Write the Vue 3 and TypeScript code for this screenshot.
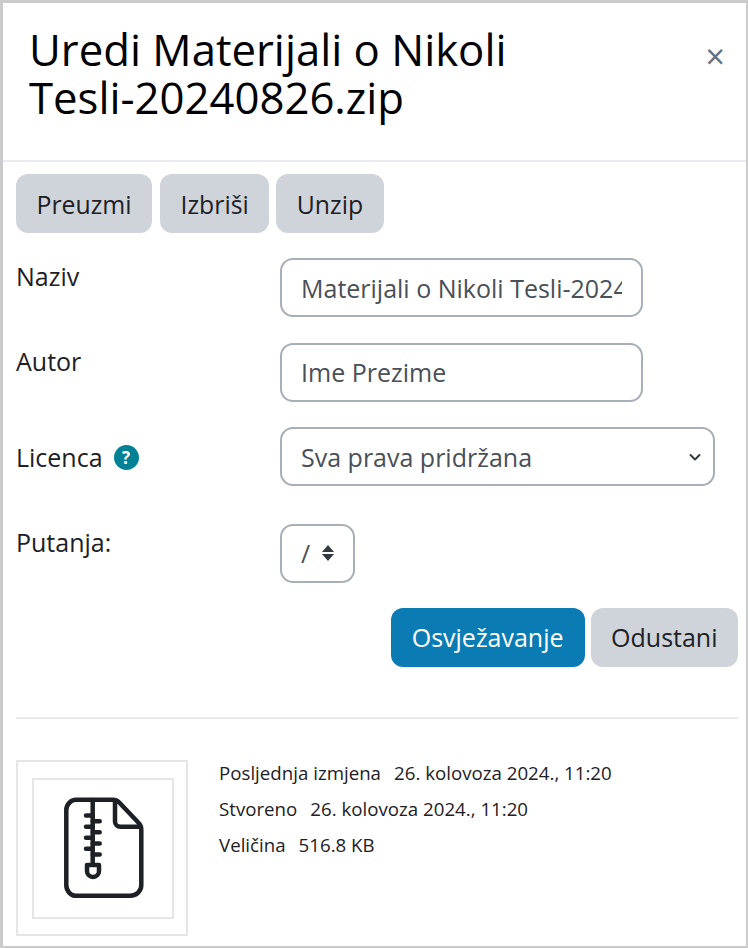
<template>
  <div class="modal">
    <header class="modal-header">
      <h1 class="modal-title">Uredi {{ fileName }}</h1>
      <button class="close-btn" aria-label="Zatvori">×</button>
    </header>

    <div class="modal-body">
      <div class="file-actions">
        <button class="btn">Preuzmi</button>
        <button class="btn">Izbriši</button>
        <button class="btn">Unzip</button>
      </div>

      <div class="form-row">
        <label class="form-label">Naziv</label>
        <input class="form-input" type="text" v-model="title" />
      </div>
      <div class="form-row">
        <label class="form-label">Autor</label>
        <input class="form-input" type="text" v-model="author" />
      </div>
      <div class="form-row licence-row">
        <label class="form-label">
          Licenca
          <span class="help-icon">?</span>
        </label>
        <div class="select-wrap">
          <select class="form-input form-select" v-model="licence">
            <option>Sva prava pridržana</option>
          </select>
          <svg class="select-arrow" viewBox="0 0 16 16" width="16" height="16">
            <path d="M3.5 6l4.5 4.5L12.5 6" fill="none" stroke="#343a40" stroke-width="2" stroke-linecap="round" stroke-linejoin="round" />
          </svg>
        </div>
      </div>
      <div class="form-row path-row">
        <label class="form-label">Putanja:</label>
        <button class="path-btn">
          <span>/</span>
          <svg viewBox="0 0 14 18" width="14" height="18">
            <path d="M7 1l6 7H1zM7 17l6-7H1z" fill="#343a40" />
          </svg>
        </button>
      </div>

      <div class="form-actions">
        <button class="btn btn-primary">Osvježavanje</button>
        <button class="btn">Odustani</button>
      </div>

      <hr class="divider" />

      <div class="file-info">
        <div class="thumb">
          <div class="thumb-inner">
            <!-- zip file icon -->
            <svg viewBox="0 0 81 102" width="81" height="102" fill="none" stroke="#1d2125" stroke-width="4.5" stroke-linecap="round" stroke-linejoin="round">
              <path d="M13 2.800h37c2.500 0 4.500 1 6 2.500l19.500 20.500c2 2 2.800 4 2.800 6.500V88c0 6-4.800 10.800-10.800 10.800H13C7.800 98.800 3.300 94 3.300 88V13C3.300 7.500 7.800 2.800 13 2.800z" />
              <path d="M52 4v20.500c0 3 2.300 5.300 5.300 5.300H77" />
              <path d="M29.700 3v64.500" />
              <path d="M23 18.500h6.700M23 29.800h6.700M23 40.800h6.700M23 51.800h6.700" />
              <path d="M29.700 24.200h7M29.700 35.200h7M29.700 46.500h7M29.700 57.500h7" />
              <path d="M24 68h12v6a6 6 0 0 1-12 0z" />
            </svg>
          </div>
        </div>
        <dl class="meta">
          <div v-for="item in meta" :key="item.label" class="meta-row">
            <dt>{{ item.label }}</dt>
            <dd>{{ item.value }}</dd>
          </div>
        </dl>
      </div>
    </div>
  </div>
</template>

<script setup lang="ts">
import { ref } from 'vue';

const fileName = 'Materijali o Nikoli Tesli-20240826.zip';
const title = ref(fileName);
const author = ref('Ime Prezime');
const licence = ref('Sva prava pridržana');

const meta = [
  { label: 'Posljednja izmjena', value: '26. kolovoza 2024., 11:20' },
  { label: 'Stvoreno', value: '26. kolovoza 2024., 11:20' },
  { label: 'Veličina', value: '516.8 KB' }
];
</script>

<style>
html,
body {
  margin: 0;
  background: #fff;
}
</style>

<style scoped>
.modal {
  box-sizing: border-box;
  width: 748px;
  height: 948px;
  overflow: hidden;
  border: 3px solid #cbcbcb;
  border-right-width: 2px;
  border-bottom-width: 2px;
  background: #fff;
  color: #1d2125;
  font-family: "Open Sans", sans-serif;
}

.modal-header {
  box-sizing: border-box;
  display: flex;
  justify-content: space-between;
  align-items: flex-start;
  height: 159px;
  padding: 22px 0 0 26px;
  border-bottom: 2px solid #e9ecef;
}

.modal-title {
  width: 560px;
  margin: 0;
  font-size: 43.7px;
  font-weight: 400;
  line-height: 48px;
  color: #000;
}

.close-btn {
  margin: 14px 21px 0 0;
  padding: 0;
  border: none;
  background: none;
  font-family: inherit;
  font-size: 34px;
  line-height: 34px;
  color: #6a737b;
}

.modal-body {
  padding: 12px 8px 0 13px;
}

.file-actions {
  display: flex;
  gap: 8px;
  margin-bottom: 25px;
}

.btn {
  box-sizing: border-box;
  height: 59px;
  padding: 0 20.5px;
  border: none;
  border-radius: 12px;
  background: #ced4da;
  color: #1d2125;
  font-family: inherit;
  font-size: 25px;
}

.file-actions .btn {
  font-size: 24.8px;
}

.file-actions .btn:nth-child(3) {
  margin-left: -1px;
}

.btn-primary {
  padding: 0 21px;
  background: #0a7cb3;
  color: #fff;
}

.form-row {
  display: flex;
  align-items: flex-start;
  height: 59px;
  margin-bottom: 25.5px;
}

.form-label {
  display: flex;
  align-items: center;
  gap: 11px;
  flex: 0 0 264px;
  font-size: 25px;
  line-height: 36px;
}

.licence-row .form-label {
  margin-top: 12px;
}

.form-input {
  box-sizing: border-box;
  width: 363px;
  height: 59px;
  padding: 0 19px;
  border: 2px solid #a9afb7;
  border-radius: 13px;
  background: #fff;
  color: #495057;
  font-family: inherit;
  font-size: 25px;
  outline: none;
}

.select-wrap {
  position: relative;
}

.form-select {
  width: 435px;
  appearance: none;
  padding-right: 48px;
}

.select-arrow {
  position: absolute;
  top: 22px;
  right: 12px;
  pointer-events: none;
}

.help-icon {
  display: inline-flex;
  align-items: center;
  justify-content: center;
  width: 25px;
  height: 25px;
  border-radius: 50%;
  background: #008196;
  color: #fff;
  font-size: 17px;
  font-weight: 700;
  line-height: 1;
}

.path-row {
  margin-top: 37.5px;
  margin-bottom: 25px;
}

.path-btn {
  box-sizing: border-box;
  display: flex;
  align-items: center;
  gap: 11px;
  width: 75px;
  height: 59px;
  padding: 0 0 0 19px;
  border: 2px solid #a9afb7;
  border-radius: 13px;
  background: #fff;
  color: #495057;
  font-family: inherit;
  font-size: 25px;
}

.form-actions {
  display: flex;
  justify-content: flex-end;
  gap: 6px;
}

.divider {
  margin: 50px 0 41px 0;
  border: none;
  border-top: 2px solid #e9ecef;
}

.file-info {
  display: flex;
  align-items: flex-start;
  gap: 31px;
}

.thumb {
  box-sizing: border-box;
  display: flex;
  align-items: center;
  justify-content: center;
  width: 172px;
  height: 176px;
  padding: 1px 0 0 2px;
  border: 2px solid #e6e6e6;
}

.thumb-inner {
  box-sizing: border-box;
  display: flex;
  align-items: center;
  justify-content: center;
  width: 142px;
  height: 141px;
  border: 2px solid #e6e6e6;
}

.meta {
  margin: 0;
  font-size: 18.7px;
}

.meta-row {
  display: flex;
  gap: 13px;
  height: 36px;
  line-height: 26px;
}

.meta dt,
.meta dd {
  margin: 0;
  font-weight: 400;
}
</style>
